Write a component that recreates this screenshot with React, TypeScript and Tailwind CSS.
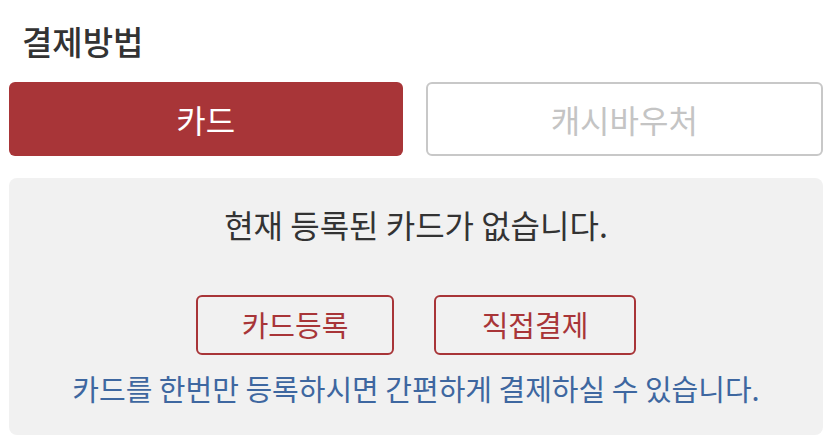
const font = "font-['Noto_Sans_CJK_KR','Noto_Sans',sans-serif]";

export default function App() {
  return (
    <div className={`w-[832px] h-[446px] bg-white px-[9px] ${font}`}>
      <h2 className="pl-[13px] pt-[21px] text-[33px] leading-[40px] font-medium text-[#333333]">
        결제방법
      </h2>
      <div className="mt-[21px] flex gap-[23px]">
        <button className="flex-1 h-[74px] rounded-[6px] bg-[#a83538] text-white text-[32px]">
          카드
        </button>
        <button className="flex-1 h-[74px] rounded-[6px] border-2 border-[#c8c8c8] bg-white text-[#c4c4c4] text-[32px]">
          캐시바우처
        </button>
      </div>
      <div className="mt-[22px] h-[257px] rounded-[8px] bg-[#f1f1f1] flex flex-col items-center pt-[26px]">
        <p className="text-[32px] leading-[40px] text-[#333333]">현재 등록된 카드가 없습니다.</p>
        <div className="mt-[51px] flex gap-[40px]">
          <button className="w-[198px] h-[60px] rounded-[6px] border-2 border-[#a83538] text-[#a83538] text-[29px]">
            카드등록
          </button>
          <button className="w-[202px] h-[60px] rounded-[6px] border-2 border-[#a83538] text-[#a83538] text-[29px]">
            직접결제
          </button>
        </div>
        <p className="mt-[15px] text-[29px] leading-[36px] text-[#3e67a0]">
          카드를 한번만 등록하시면 간편하게 결제하실 수 있습니다.
        </p>
      </div>
    </div>
  );
}
